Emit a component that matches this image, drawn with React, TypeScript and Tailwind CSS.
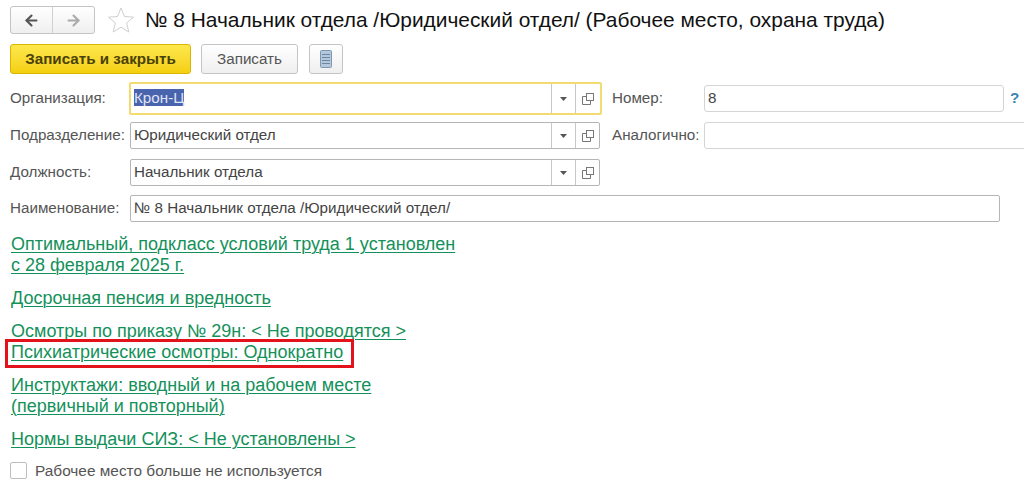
import { ArrowLeft, ArrowRight } from 'lucide-react'

function CopyIcon() {
  return (
    <svg width="14" height="14" viewBox="0 0 14 14" fill="none" stroke="#777" strokeWidth="1">
      <rect x="5.5" y="1.5" width="7" height="7" />
      <path d="M5 4.5H1.5V12.5H9.5V9" />
    </svg>
  )
}

function Field({ label, value, focused, selected }: { label: string; value: string; focused?: boolean; selected?: boolean }) {
  return (
    <div className="flex items-center h-[27px]">
      <div className="w-[120px] text-[#555]">{label}</div>
      <div className={`flex items-center bg-white rounded-[2px] ${focused ? 'h-[33px] w-[473px] border-2 border-[#f2dc72] -ml-[1px]' : 'h-[27px] w-[470px] border border-[#b5b5b5]'}`}>
        <div className="flex-1 pl-[3px] text-[#444]">
          {selected ? <span className="bg-[#4a63ad] text-[#dfe4f5]">{value}</span> : value}
        </div>
        <div className="w-[24px] h-full flex items-center justify-center border-l border-[#c8c8c8]">
          <svg width="7" height="4" viewBox="0 0 7 4"><path d="M0 0H7L3.5 4Z" fill="#555" /></svg>
        </div>
        <div className={`h-full flex items-center justify-center border-l border-[#c8c8c8] ${focused ? 'w-[25px]' : 'w-[24px]'}`}>
          <CopyIcon />
        </div>
      </div>
    </div>
  )
}

const linkClass = 'text-[#14915a] underline underline-offset-2 decoration-1 text-[18px] leading-[21px]'

export default function App() {
  return (
    <div className="w-[1024px] h-[492px] overflow-hidden bg-white font-['Liberation_Sans',Arial,sans-serif] text-[15.2px] px-[10px] pt-[6px]">
      <div className="flex items-center h-[28px]">
        <div className="flex w-[85px] h-[28px] rounded-[3px] border border-[#c4c4c4] bg-gradient-to-b from-white to-[#efefef]">
          <div className="flex-1 flex items-center justify-center border-r border-[#d0d0d0]">
            <ArrowLeft size={17} strokeWidth={3} color="#555" />
          </div>
          <div className="flex-1 flex items-center justify-center">
            <ArrowRight size={17} strokeWidth={3} color="#aaa" />
          </div>
        </div>
        <svg className="ml-[12px]" width="28" height="28" viewBox="0 0 28 28" fill="#fff" stroke="#cfcfcf">
          <path d="M14 2L17.5 10.5L26.5 11.2L19.6 17L21.8 26L14 21.2L6.2 26L8.4 17L1.5 11.2L10.5 10.5Z" />
        </svg>
        <h1 className="ml-[10px] text-[20.9px] text-[#111] whitespace-nowrap">№ 8 Начальник отдела /Юридический отдел/ (Рабочее место, охрана труда)</h1>
      </div>

      <div className="flex items-center mt-[10px] h-[30px]">
        <div className="w-[181px] h-[30px] flex items-center justify-center rounded-[3px] border border-[#d9b400] bg-gradient-to-b from-[#fde84a] to-[#f5cf0a] font-bold text-[15.2px] text-[#4a4208]">
          Записать и закрыть
        </div>
        <div className="ml-[10px] w-[97px] h-[30px] flex items-center justify-center rounded-[3px] border border-[#c4c4c4] bg-gradient-to-b from-white to-[#efefef] text-[#555]">
          Записать
        </div>
        <div className="ml-[11px] w-[34px] h-[30px] flex items-center justify-center rounded-[3px] border border-[#c4c4c4] bg-gradient-to-b from-white to-[#efefef]">
          <svg width="12" height="18" viewBox="0 0 12 18">
            <rect x="0.5" y="0.5" width="11" height="17" rx="1" fill="#b4c8da" stroke="#7d98b2" />
            <path d="M2 4.5H10M2 7.5H10M2 10.5H10M2 13.5H10" stroke="#6a88a5" />
          </svg>
        </div>
      </div>

      <div className="flex mt-[8px]">
        <div className="flex flex-col gap-[10px] pt-[3px]">
          <Field label="Организация:" value="Крон-Ц" focused selected />
          <Field label="Подразделение:" value="Юридический отдел" />
          <Field label="Должность:" value="Начальник отдела" />
        </div>
        <div className="flex flex-col gap-[10px] ml-[10px] pt-[3px]">
          <div className="flex items-center h-[27px]">
            <div className="w-[92px] text-[#555]">Номер:</div>
            <div className="w-[300px] h-[27px] pl-[3px] flex items-center rounded-[3px] border border-[#d4d4d4] text-[#444]">8</div>
            <div className="ml-[6px] text-[#3a85b8] font-bold">?</div>
          </div>
          <div className="flex items-center h-[27px]">
            <div className="w-[92px] text-[#555] whitespace-nowrap">Аналогично:</div>
            <div className="w-[330px] h-[27px] rounded-[3px] border border-[#d4d4d4]" />
          </div>
        </div>
      </div>

      <div className="flex items-center h-[27px] mt-[9px]">
        <div className="w-[120px] text-[#555]">Наименование:</div>
        <div className="w-[870px] h-[27px] pl-[3px] flex items-center rounded-[2px] border border-[#b5b5b5] text-[#444]">№ 8 Начальник отдела /Юридический отдел/</div>
      </div>

      <div className="mt-[12px] pl-[1px] flex flex-col items-start">
        <a className={linkClass}>Оптимальный, подкласс условий труда 1 установлен<br />с 28 февраля 2025 г.</a>
        <a className={`${linkClass} mt-[12px]`}>Досрочная пенсия и вредность</a>
        <a className={`${linkClass} mt-[12px]`}>Осмотры по приказу № 29н: &lt; Не проводятся &gt;</a>
        <a className={`${linkClass} -ml-[3px] pl-[3px] w-[343px] h-[23px] outline-[3px] outline-[#e2131b]`}>Психиатрические осмотры: Однократно</a>
        <a className={`${linkClass} mt-[10px]`}>Инструктажи: вводный и на рабочем месте<br />(первичный и повторный)</a>
        <a className={`${linkClass} mt-[12px]`}>Нормы выдачи СИЗ: &lt; Не установлены &gt;</a>
      </div>

      <div className="flex items-center mt-[9px]">
        <div className="w-[17px] h-[17px] rounded-[2px] border border-[#bdbdbd] bg-white" />
        <span className="ml-[8px] text-[15.4px] text-[#555]">Рабочее место больше не используется</span>
      </div>
    </div>
  )
}
